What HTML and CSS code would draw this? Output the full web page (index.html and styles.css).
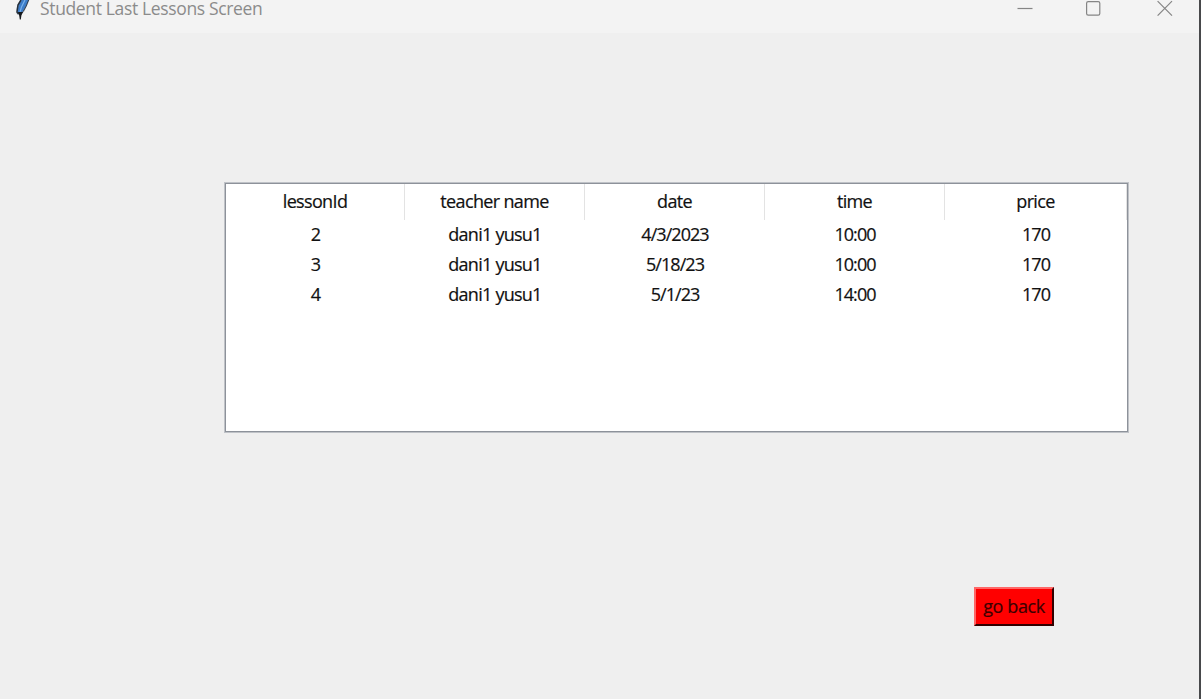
FILE: index.html
```html
<!DOCTYPE html>
<html lang="en">
<head>
<meta charset="utf-8">
<title>Student Last Lessons Screen</title>
<link rel="stylesheet" href="styles.css">
</head>
<body>
<div class="window">
  <header class="titlebar">
    <svg class="feather" width="16" height="20" viewBox="0 0 16 20">
      <path d="M5 0 L2.2 5 L1.2 10 L1.8 14 L4.6 15.5 L9 12 L12 6 L14.4 0Z" fill="#b9bec5"/>
      <path d="M6.5 0 L3.5 5 L2.5 12 L4.5 15 L8 11 L11 6 L13.6 0Z" fill="#3c7cc8"/>
      <path d="M6 0 L3 5 L2 12 L3.5 14" fill="none" stroke="#25303c" stroke-width="1.5"/>
      <path d="M13.6 0 L11.2 6 L8.2 11.5 L5.5 14" fill="none" stroke="#2b3a4b" stroke-width="1"/>
      <path d="M10 0 L6.5 7 L5 12" fill="none" stroke="#79b2ec" stroke-width="1.2"/>
      <path d="M3 12 L8 12 L6.4 15.5 L5.8 19.5 L4.8 19.5 L4.2 15.5Z" fill="#15181c"/>
    </svg>
    <h1 class="title">Student Last Lessons Screen</h1>
    <div class="controls">
      <svg width="16" height="16" viewBox="0 0 16 16"><path d="M0.5 8.5H15.5"/></svg>
      <svg width="16" height="16" viewBox="0 0 16 16"><rect x="0.6" y="1.6" width="13.2" height="13.6" rx="1.6"/></svg>
      <svg width="16" height="16" viewBox="0 0 16 16"><path d="M0.6 1.2L15 15.6M15 1.2L0.6 15.6"/></svg>
    </div>
  </header>
  <main class="content">
    <div class="tree">
      <div class="row head"><span>lessonId</span><span>teacher name</span><span>date</span><span>time</span><span>price</span></div>
      <div class="row"><span>2</span><span class="name">dani1 yusu1</span><span>4/3/2023</span><span>10:00</span><span>170</span></div>
      <div class="row"><span>3</span><span class="name">dani1 yusu1</span><span>5/18/23</span><span>10:00</span><span>170</span></div>
      <div class="row"><span>4</span><span class="name">dani1 yusu1</span><span>5/1/23</span><span>14:00</span><span>170</span></div>
    </div>
    <button class="back">go back</button>
  </main>
</div>
</body>
</html>
```
FILE: styles.css
```css
* { box-sizing: border-box; }
body {
  margin: 0;
  overflow: hidden;
  font-family: "Open Sans", "Noto Sans", sans-serif;
}
.window {
  display: flex;
  flex-direction: column;
  height: 699px;
  background: #efefef;
  border-right: 2px solid #48494b;
}
.titlebar {
  display: flex;
  align-items: flex-start;
  height: 33px;
  padding: 0 26px 0 15px;
  background: #f3f3f3;
}
.feather { flex: none; }
.title {
  margin: 0 0 0 9px;
  font-size: 17.5px;
  font-weight: 400;
  line-height: 16px;
  letter-spacing: -0.35px;
  color: #8b8b8b;
  white-space: nowrap;
}
.controls {
  display: flex;
  gap: 54px;
  margin-left: auto;
}
.controls svg {
  fill: none;
  stroke: #858585;
  stroke-width: 1.2;
}
.controls svg:nth-child(2) { margin: 0 1px 0 -1px; }
.content {
  display: flex;
  flex: 1;
  flex-direction: column;
  align-items: flex-start;
  padding: 149px 0 0 224px;
}
.tree {
  width: 905px;
  height: 251px;
  padding: 1px;
  background: #fff;
  border: 1px solid #bfc2c7;
  box-shadow: inset 0 0 0 1px #8d929a;
}
.row {
  display: grid;
  grid-template-columns: 179px 180px 180px 180px 182px;
  height: 30px;
  font-size: 18px;
  line-height: 30px;
  letter-spacing: -0.95px;
  text-align: center;
  color: #111;
  -webkit-text-stroke: 0.2px #111;
}
.name { letter-spacing: -0.75px; }
.head {
  height: 36px;
  margin-bottom: -1px;
  line-height: 35px;
  letter-spacing: -0.65px;
}
.head span { border-right: 1px solid #e3e3e3; }
.back {
  width: 80px;
  height: 39px;
  margin: 154px 0 0 750px;
  padding: 0;
  font: 18px/33px "Open Sans", "Noto Sans", sans-serif;
  letter-spacing: -0.4px;
  white-space: nowrap;
  color: #3b0000;
  -webkit-text-stroke: 0.2px #3b0000;
  background: #f00;
  border: 2px solid;
  border-color: #f66 #300 #300 #f66;
}
```
